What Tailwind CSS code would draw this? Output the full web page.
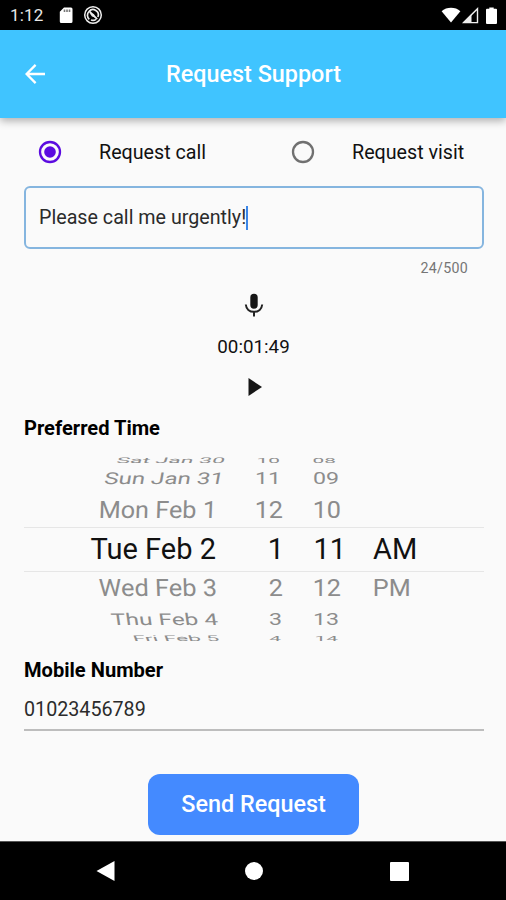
<html>

<head>
    <title>Request Support</title>
    <meta charset="utf-8">
    <script src="https://cdn.jsdelivr.net/npm/@tailwindcss/browser@4"></script>
</head>

<body class="bg-black">
    <div id="screen" class="flex flex-col w-[506px] h-[900px] overflow-hidden bg-[#fafafa] font-[Roboto,sans-serif] text-[#111]">
        <!-- status bar -->
        <div class="flex items-center shrink-0 h-[30px] px-2.5 bg-black text-[#e8e8e8]">
            <span class="w-[49px] pt-px text-[17px] leading-none tracking-[0.2px]">1:12</span>
            <svg class="w-[14px] h-[17px]" viewBox="0 0 14 17">
                <path d="M5 .5h7A1.500 1.500 0 0113.500 2v12.500a1.500 1.500 0 01-1.500 1.500H2.300A1.500 1.500 0 01.8 14.500V4.700z" fill="#fff" />
                <path d="M5.500 2.500v2.400M8 2.500v2.400M10.500 2.500v2.400" stroke="#777" stroke-width="1.600" />
            </svg>
            <svg class="w-5 h-5 ml-[10px]" viewBox="0 0 20 20" fill="none" stroke="#ededed">
                <circle cx="10" cy="10" r="8.300" stroke-width="1.500" />
                <path d="M6.300 14.300A5.300 5.300 0 016 6.500 5.300 5.300 0 0114.900 12M8 15a5.300 5.300 0 005-.6" stroke-width="1.700" />
                <path d="M6.200 6.200l8 8" stroke-width="1.800" />
                <path d="M6.500 8l2.500 3.500 3 1-1-3.500z" fill="#ededed" stroke="none" />
            </svg>
            <svg class="w-[20px] h-[16px] ml-auto" viewBox="0 0 20 16" fill="#fff">
                <path d="M.6 4.200C5.500-.3 14.500-.3 19.400 4.200L10 15.600z" />
            </svg>
            <svg class="w-[17px] h-[17px] ml-px" viewBox="0 0 17 17">
                <path d="M1.600 15.600L15.500 1.700v13.900z" fill="none" stroke="#eee" stroke-width="1.400" />
                <path d="M1 16L9.500 7v9z" fill="#eee" />
            </svg>
            <svg class="w-[11px] h-[17px] ml-[7px] -mr-px" viewBox="0 0 11 17" fill="#fff">
                <path d="M3.300 .5h4.400v1.200H10q1 0 1 1V16q0 1-1 1H1q-1 0-1-1V2.700q0-1 1-1h2.300z" />
            </svg>
        </div>

        <!-- app bar -->
        <header class="relative flex items-center justify-center shrink-0 h-[88px] bg-[#40c4ff] text-white shadow-[0_3px_8px_rgba(0,0,0,0.3)]">
            <svg class="absolute left-[25px] top-[34px] w-5 h-5" viewBox="0 0 20 20" fill="none" stroke="#fff" stroke-width="2.300">
                <path d="M20 10H2M10.600 .9L1.600 10l9 9.100" />
            </svg>
            <h1 class="pt-0.5 pl-px text-[23.400px] font-medium leading-none">Request Support</h1>
        </header>

        <main class="flex flex-col shrink-0 px-6">
            <div class="flex h-[68px] items-center text-[19.700px]">
                <label class="flex items-center w-[253px] pl-[13.500px]">
                    <svg class="w-6 h-6 mr-[37.500px]" viewBox="0 0 24 24">
                        <circle cx="12" cy="12" r="10" fill="none" stroke="#5b0be0" stroke-width="2.300" />
                        <circle cx="12" cy="12" r="5.800" fill="#5b0be0" />
                    </svg>
                    <span class="pt-0.5">Request call</span>
                </label>
                <label class="flex items-center pl-[13.500px]">
                    <svg class="w-6 h-6 mr-[37.500px]" viewBox="0 0 24 24">
                        <circle cx="12" cy="12" r="10" fill="none" stroke="#707070" stroke-width="2.300" />
                    </svg>
                    <span class="pt-0.5">Request visit</span>
                </label>
            </div>

            <div class="flex items-center h-[63px] w-[460px] px-[13px] border-2 border-[#85b5df] rounded-md text-[19.700px] text-[#2b2b2b]">
                <span>Please call me urgently!</span>
                <span class="w-0.5 h-6 bg-[#3b86e8]"></span>
            </div>
            <div class="h-[37px] pr-[14px] pt-[7px] text-right text-[14.200px] leading-6 tracking-[0.300px] text-[#757575]">24/500</div>

            <!-- voice note -->
            <div class="flex flex-col items-center">
                <svg class="w-[20px] h-[26px] mt-[7px] ml-px" viewBox="0 0 20 26">
                    <rect x="6.300" y=".7" width="7.400" height="15" rx="3.700" fill="#161616" />
                    <path d="M1.800 11.500c.4 4.600 3.700 7.300 8.200 7.300s7.800-2.700 8.200-7.300M10 18.800v4.700" fill="none" stroke="#222" stroke-width="2" />
                </svg>
                <span class="mt-[16px] ml-px text-[18.800px] leading-6">00:01:49</span>
                <svg class="w-[16px] h-[18px] mt-[19px] ml-[3px]" viewBox="0 0 16 18" fill="#161616">
                    <path d="M1.500 0l13.500 9-13.500 9z" />
                </svg>
            </div>

            <h2 class="mt-[20px] text-[20.100px] font-bold leading-6 text-black">Preferred Time</h2>

            <!-- wheel picker, rows flatten towards both ends -->
            <div class="relative shrink-0 w-[460px] h-[184px] mt-[17px] overflow-hidden text-[29px] text-[#8c8c8c]">
                <div class="grid grid-cols-[192px_67px_62px_1fr] grid-rows-[8px] items-center h-[8px] leading-none text-right whitespace-nowrap">
                    <span class="origin-right transform-[translate(9px,-1px)_skewX(-20deg)_scale(0.79,0.27)]">Sat Jan 30</span>
                    <span class="origin-right transform-[translate(-3px,-1px)_scale(0.72,0.27)]">10</span>
                    <span class="origin-right transform-[translate(-9px,-1px)_scale(0.72,0.27)]">08</span>
                </div>
                <div class="grid grid-cols-[192px_67px_62px_1fr] grid-rows-[27px] items-center h-[27px] leading-none text-right whitespace-nowrap">
                    <span class="origin-right transform-[translate(8px)_skewX(-10deg)_scale(0.83,0.56)]">Sun Jan 31</span>
                    <span class="origin-right transform-[translate(-2px)_scale(0.8,0.56)]">11</span>
                    <span class="origin-right transform-[translate(-6px)_scale(0.8,0.56)]">09</span>
                </div>
                <div class="grid grid-cols-[192px_67px_62px_1fr] grid-rows-[36px] items-center h-[36px] leading-none text-right whitespace-nowrap">
                    <span class="origin-right transform-[translate(1px)_skewX(-2deg)_scale(0.87,0.82)]">Mon Feb 1</span>
                    <span class="origin-right transform-[scale(0.87,0.82)]">12</span>
                    <span class="origin-right transform-[translate(-4px)_scale(0.87,0.82)]">10</span>
                </div>
                <div class="grid grid-cols-[192px_67px_62px_1fr] grid-rows-[43px] items-center h-[43px] leading-none text-right whitespace-nowrap text-[#111]">
                    <span>Tue Feb 2</span>
                    <span class="-mr-px">1</span>
                    <span class="-mr-px">11</span>
                    <span class="pl-[28px] text-left">AM</span>
                </div>
                <div class="grid grid-cols-[192px_67px_62px_1fr] grid-rows-[34px] items-center h-[34px] leading-none text-right whitespace-nowrap">
                    <span class="origin-right transform-[translate(1px)_skewX(2deg)_scale(0.875,0.82)]">Wed Feb 3</span>
                    <span class="origin-right transform-[scale(0.87,0.82)]">2</span>
                    <span class="origin-right transform-[translate(-4px)_scale(0.87,0.82)]">12</span>
                    <span class="origin-left pl-[32px] text-left transform-[scale(0.87,0.82)]">PM</span>
                </div>
                <div class="grid grid-cols-[192px_67px_62px_1fr] grid-rows-[28px] items-center h-[28px] leading-none text-right whitespace-nowrap">
                    <span class="origin-right transform-[translate(2px)_skewX(8deg)_scale(0.84,0.56)]">Thu Feb 4</span>
                    <span class="origin-right transform-[translate(-1px)_scale(0.8,0.56)]">3</span>
                    <span class="origin-right transform-[translate(-6px)_scale(0.8,0.56)]">13</span>
                </div>
                <div class="grid grid-cols-[192px_67px_62px_1fr] grid-rows-[8px] items-center h-[8px] leading-none text-right whitespace-nowrap">
                    <span class="origin-right transform-[translate(3px,1px)_skewX(20deg)_scale(0.78,0.27)]">Fri Feb 5</span>
                    <span class="origin-right transform-[translate(-2px,1px)_scale(0.72,0.27)]">4</span>
                    <span class="origin-right transform-[translate(-7px,1px)_scale(0.72,0.27)]">14</span>
                </div>
                <div class="absolute inset-x-0 top-[70px] h-[45px] border-y border-[#e6e6e6]"></div>
            </div>

            <h2 class="mt-[17px] text-[20.100px] font-bold leading-6 text-black">Mobile Number</h2>
            <div class="mt-[15px] w-[460px] h-[34px] pt-px border-b-2 border-[#bdbdbd] text-[19.700px] leading-6 text-[#2b2b2b]">01023456789</div>

            <button class="self-center mt-[43px] w-[211px] h-[61px] rounded-xl bg-[#448aff] pt-px pl-px text-[23.400px] font-medium text-white">Send Request</button>
        </main>

        <!-- system navigation -->
        <div class="flex items-center shrink-0 h-[59px] mt-auto pl-[96px] border-t border-[#555] bg-black">
            <svg class="w-[19px] h-[22px]" viewBox="0 0 19 22" fill="#fff">
                <path d="M18.500 1v20L.5 11z" />
            </svg>
            <span class="w-[18px] h-[18px] ml-[130px] rounded-full bg-white"></span>
            <span class="w-[19px] h-[19px] ml-[127px] rounded-[1px] bg-white"></span>
        </div>
    </div>
</body>

</html>
